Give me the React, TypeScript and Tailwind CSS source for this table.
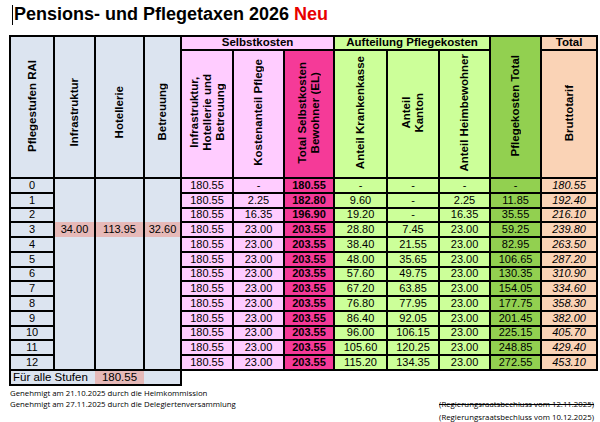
const rows: string[][] = [
  ["0", "180.55", "-", "180.55", "-", "-", "-", "-", "180.55"],
  ["1", "180.55", "2.25", "182.80", "9.60", "-", "2.25", "11.85", "192.40"],
  ["2", "180.55", "16.35", "196.90", "19.20", "-", "16.35", "35.55", "216.10"],
  ["3", "180.55", "23.00", "203.55", "28.80", "7.45", "23.00", "59.25", "239.80"],
  ["4", "180.55", "23.00", "203.55", "38.40", "21.55", "23.00", "82.95", "263.50"],
  ["5", "180.55", "23.00", "203.55", "48.00", "35.65", "23.00", "106.65", "287.20"],
  ["6", "180.55", "23.00", "203.55", "57.60", "49.75", "23.00", "130.35", "310.90"],
  ["7", "180.55", "23.00", "203.55", "67.20", "63.85", "23.00", "154.05", "334.60"],
  ["8", "180.55", "23.00", "203.55", "76.80", "77.95", "23.00", "177.75", "358.30"],
  ["9", "180.55", "23.00", "203.55", "86.40", "92.05", "23.00", "201.45", "382.00"],
  ["10", "180.55", "23.00", "203.55", "96.00", "106.15", "23.00", "225.15", "405.70"],
  ["11", "180.55", "23.00", "203.55", "105.60", "120.25", "23.00", "248.85", "429.40"],
  ["12", "180.55", "23.00", "203.55", "115.20", "134.35", "23.00", "272.55", "453.10"],
];

function VText({ children }: { children: React.ReactNode }) {
  return (
    <span className="inline-block rotate-180 text-center leading-[13px] [writing-mode:vertical-rl]">
      {children}
    </span>
  );
}

const cell = "border-2 border-black p-0 text-center align-middle";

export default function App() {
  return (
    <div className="h-[422px] w-[600px] overflow-hidden bg-white font-['Liberation_Sans',Arial,sans-serif] text-black">
      <div className="flex h-[35px] items-start pl-[12px] pt-[4px]">
        <span className="mr-[1px] mt-[1px] h-[20px] w-px bg-black" />
        <h1 className="text-[18px] font-bold leading-[20px]">
          Pensions- und Pflegetaxen 2026 <span className="text-[#e80000]">Neu</span>
        </h1>
      </div>

      <table className="ml-[9px] w-[587px] table-fixed border-collapse text-[11px] leading-none">
        <colgroup>
          <col className="w-[44px]" />
          <col className="w-[41px]" />
          <col className="w-[49px]" />
          <col className="w-[37px]" />
          <col className="w-[52px]" />
          <col className="w-[51px]" />
          <col className="w-[50px]" />
          <col className="w-[53px]" />
          <col className="w-[52px]" />
          <col className="w-[51px]" />
          <col className="w-[51px]" />
          <col className="w-[56px]" />
        </colgroup>
        <thead className="text-[11.5px] font-bold">
          <tr className="h-[14px]">
            <th rowSpan={2} className={`${cell} bg-[#dce4f0]`}>
              <VText>Pflegestufen RAI</VText>
            </th>
            <th rowSpan={2} className={`${cell} bg-[#dce4f0] pt-[12px]`}>
              <VText>Infrastruktur</VText>
            </th>
            <th rowSpan={2} className={`${cell} bg-[#dce4f0] pt-[12px]`}>
              <VText>Hotellerie</VText>
            </th>
            <th rowSpan={2} className={`${cell} bg-[#dce4f0] pt-[12px]`}>
              <VText>Betreuung</VText>
            </th>
            <th colSpan={3} className={`${cell} bg-[#ffccff]`}>Selbstkosten</th>
            <th colSpan={3} className={`${cell} bg-[#ccff99]`}>Aufteilung Pflegekosten</th>
            <th rowSpan={2} className={`${cell} bg-[#92d050]`}>
              <VText>Pflegekosten Total</VText>
            </th>
            <th className={`${cell} bg-[#fad3b6]`}>Total</th>
          </tr>
          <tr className="h-[128px]">
            <th className={`${cell} bg-[#ffccff]`}>
              <VText>
                Infrastruktur,
                <br />
                Hotellerie und
                <br />
                Betreuung
              </VText>
            </th>
            <th className={`${cell} bg-[#ffccff]`}>
              <VText>Kostenanteil Pflege</VText>
            </th>
            <th className={`${cell} bg-[#f53a98]`}>
              <VText>
                Total Selbstkosten
                <br />
                Bewohner (EL)
              </VText>
            </th>
            <th className={`${cell} bg-[#ccff99]`}>
              <VText>Anteil Krankenkasse</VText>
            </th>
            <th className={`${cell} bg-[#ccff99]`}>
              <VText>
                Anteil
                <br />
                Kanton
              </VText>
            </th>
            <th className={`${cell} bg-[#ccff99]`}>
              <VText>Anteil Heimbewohner</VText>
            </th>
            <th className={`${cell} bg-[#fad3b6]`}>
              <VText>Bruttotarif</VText>
            </th>
          </tr>
        </thead>
        <tbody>
          {rows.map((r) => {
            const mid = r[0] === "3";
            const side = `border-x-2 border-y-0 border-black p-0 text-center ${mid ? "bg-[#e6b9b8]" : "bg-[#dce4f0]"}`;
            return (
              <tr key={r[0]} className="h-[14.75px]">
                <td className={`${cell} bg-[#dce4f0]`}>{r[0]}</td>
                <td className={side}>{mid ? "34.00" : ""}</td>
                <td className={side}>{mid ? "113.95" : ""}</td>
                <td className={side}>{mid ? "32.60" : ""}</td>
                <td className={`${cell} bg-[#ffccff]`}>{r[1]}</td>
                <td className={`${cell} bg-[#ffccff]`}>{r[2]}</td>
                <td className={`${cell} bg-[#f53a98] font-bold`}>{r[3]}</td>
                <td className={`${cell} bg-[#ccff99]`}>{r[4]}</td>
                <td className={`${cell} bg-[#ccff99]`}>{r[5]}</td>
                <td className={`${cell} bg-[#ccff99]`}>{r[6]}</td>
                <td className={`${cell} bg-[#92d050]`}>{r[7]}</td>
                <td className={`${cell} bg-[#fad3b6] italic`}>{r[8]}</td>
              </tr>
            );
          })}
          <tr className="h-[15px]">
            <td colSpan={2} className="border-y-2 border-l-2 border-r-0 border-black bg-[#dce4f0] p-0 pl-[2px] text-left text-[11.5px] whitespace-nowrap">
              Für alle Stufen
            </td>
            <td className="border-y-2 border-x-0 border-black bg-[#e6b9b8] p-0 text-center text-[11.5px]">180.55</td>
            <td className="border-y-2 border-l-0 border-r-2 border-black bg-[#dce4f0] p-0" />
            <td colSpan={8} className="border-0 p-0" />
          </tr>
        </tbody>
      </table>

      <div className="flex justify-between pl-[10px] pr-[6px] font-['Open_Sans',Arial,sans-serif] text-[7.8px] leading-[11.5px]">
        <div className="pt-[2px]">
          <p>Genehmigt am 21.10.2025 durch die Heimkommission</p>
          <p>Genehmigt am 27.11.2025 durch die Delegiertenversammlung</p>
        </div>
        <div className="pt-[12px] leading-[13px]">
          <p className="line-through">(Regierungsraatsbechluss vom 12.11.2025)</p>
          <p>(Regierungsraatsbechluss vom 10.12.2025)</p>
        </div>
      </div>
    </div>
  );
}
